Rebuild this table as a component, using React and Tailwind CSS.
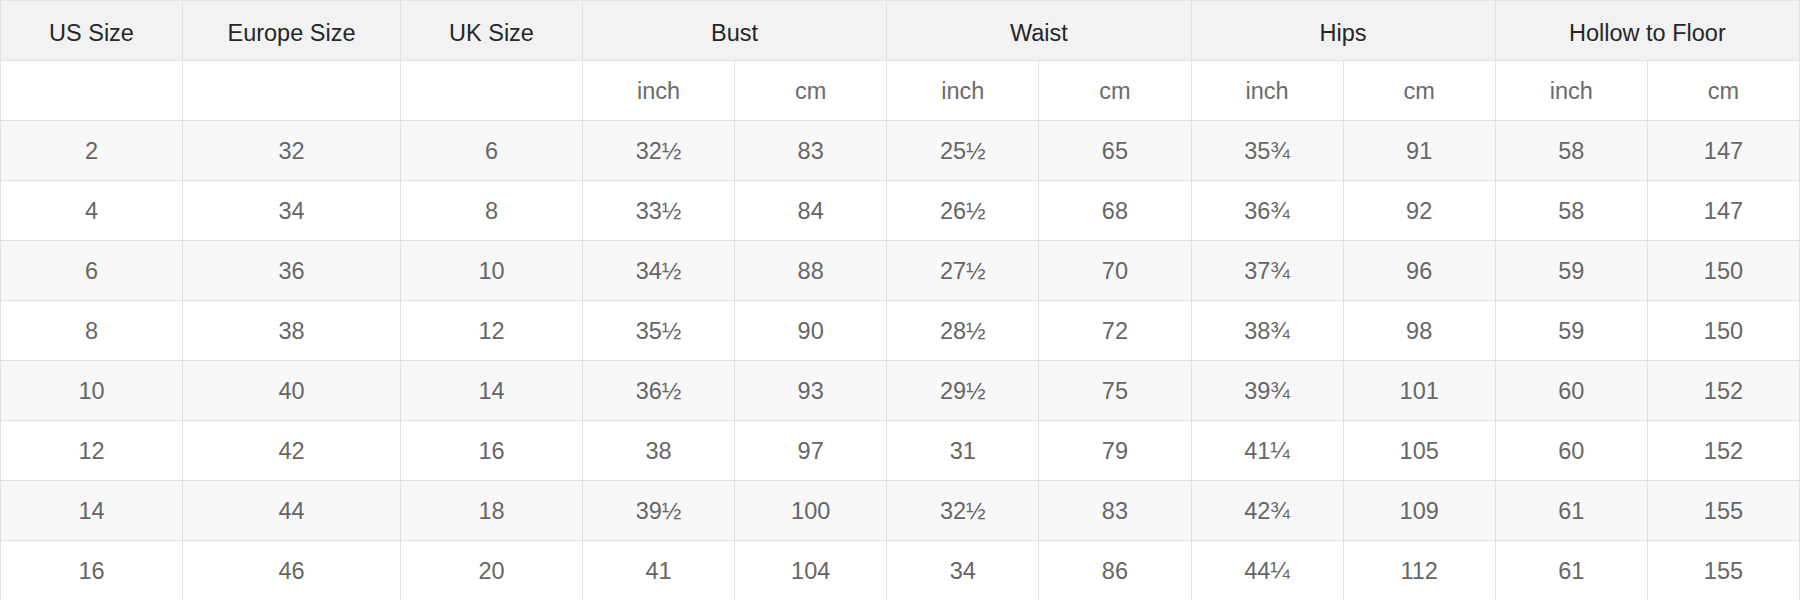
import React from 'react';

const rows = [
  ['2', '32', '6', '32½', '83', '25½', '65', '35¾', '91', '58', '147'],
  ['4', '34', '8', '33½', '84', '26½', '68', '36¾', '92', '58', '147'],
  ['6', '36', '10', '34½', '88', '27½', '70', '37¾', '96', '59', '150'],
  ['8', '38', '12', '35½', '90', '28½', '72', '38¾', '98', '59', '150'],
  ['10', '40', '14', '36½', '93', '29½', '75', '39¾', '101', '60', '152'],
  ['12', '42', '16', '38', '97', '31', '79', '41¼', '105', '60', '152'],
  ['14', '44', '18', '39½', '100', '32½', '83', '42¾', '109', '61', '155'],
  ['16', '46', '20', '41', '104', '34', '86', '44¼', '112', '61', '155'],
];

const groups = ['Bust', 'Waist', 'Hips', 'Hollow to Floor'];

const cell = 'h-[60px] p-0 pt-[3px] border border-[#e2e2e2] text-center align-middle';
const head = 'h-[60px] p-0 pt-[6px] border border-[#e2e2e2] text-center align-middle font-normal';

export default function App() {
  return (
    <div className="w-[1800px] h-[600px] bg-white font-['Liberation_Sans',Arial,sans-serif] text-[23.5px]">
      <table className="w-full table-fixed border-collapse">
        <colgroup>
          <col className="w-[182px]" />
          <col className="w-[218px]" />
          <col className="w-[182px]" />
          {Array.from({ length: 8 }).map((_, i) => (
            <col key={i} />
          ))}
        </colgroup>
        <thead>
          <tr className="bg-[#f2f2f2] text-[#262626]">
            <th className={head}>US Size</th>
            <th className={head}>Europe Size</th>
            <th className={head}>UK Size</th>
            {groups.map((g) => (
              <th key={g} colSpan={2} className={head}>
                {g}
              </th>
            ))}
          </tr>
          <tr className="bg-white text-[#6b6b6b]">
            <td className={cell}></td>
            <td className={cell}></td>
            <td className={cell}></td>
            {groups.map((g) => (
              <React.Fragment key={g}>
                <td className={cell}>inch</td>
                <td className={cell}>cm</td>
              </React.Fragment>
            ))}
          </tr>
        </thead>
        <tbody>
          {rows.map((row, r) => (
            <tr key={r} className={r % 2 === 0 ? 'bg-[#f8f8f8] text-[#666]' : 'bg-white text-[#666]'}>
              {row.map((v, c) => (
                <td key={c} className={cell}>
                  {v}
                </td>
              ))}
            </tr>
          ))}
        </tbody>
      </table>
    </div>
  );
}
